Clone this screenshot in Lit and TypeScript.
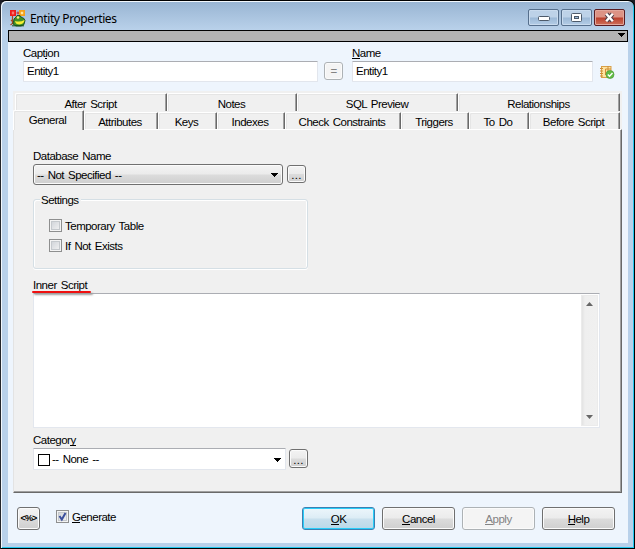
import { LitElement, html, css } from "lit";
import { customElement } from "lit/decorators.js";

const upperTabs: [string, number][] = [["After Script", 152], ["Notes", 130], ["SQL Preview", 161], ["Relationships", 162]];
const lowerTabs: [string, number][] = [["Attributes", 74], ["Keys", 59], ["Indexes", 68], ["Check Constraints", 116], ["Triggers", 68], ["To Do", 60], ["Before Script", 91]];

@customElement("app-root")
export class AppRoot extends LitElement {
  static styles = css`
    :host { display: block; width: 635px; height: 549px; background: #1c1c24; overflow: hidden;
      font: 11.5px/13px "Liberation Sans", Arial, sans-serif; letter-spacing: -.5px; word-spacing: 1.3px; color: #000; }
    * { box-sizing: border-box; }
    svg { display: block; }
    u { text-decoration: none; border-bottom: 1px solid currentColor; display: inline-block; height: 12px; line-height: 12px; }
    .window { height: 549px; padding: 1px 6px 5px 6px; display: flex; flex-direction: column;
      border: 1px solid #000; border-left-color: #24262c; border-radius: 6px 7px 0 0;
      background: linear-gradient(#98b4d2 0, #b9d1ea 29px, #b9d1ea);
      box-shadow: inset 1px 1px 0 #f2f7fc, inset -1px -1px 0 #23c7ee; }
    .title { height: 28px; flex: none; display: flex; align-items: flex-start; padding: 7px 3px 0 2px; }
    .title h1 { margin: 3px auto 0 4px; font: 12px/14px "Noto Sans", sans-serif; letter-spacing: -.4px; word-spacing: 0; }
    .wbtn { width: 31px; height: 17px; margin-left: 2px; border: 1px solid #566f8c; border-radius: 2px;
      box-shadow: inset 0 0 0 1px #c9dbee; background: linear-gradient(#bdd2e8 48%, #9bb8d6 52%, #b4cde6);
      display: flex; align-items: center; justify-content: center; }
    .close { border-color: #5a1c22; box-shadow: inset 0 0 0 1px #e2a79c; background: linear-gradient(#dc9385 48%, #ba3f2c 52%, #cf705a); }
    .bar { height: 12px; flex: none; margin: 0 0 0 1px; border: 1px solid #000; background: #b3b3b3; display: flex; justify-content: flex-end; padding: 2px 2px 0; }
    .client { flex: 1; margin: 0 0 0 1px; background: #eef5fd; display: flex; flex-direction: column; }
    .top { height: 49px; display: flex; padding: 5px 0 0 15px; flex: none; }
    .field { width: 295px; }
    .field > div:first-child { padding-left: 0; }
    .field.name { width: 241px; }
    .edit { height: 21px; margin-top: 1px; background: #fff; border: 1px solid #e2e6ed; border-top-color: #abadb3; border-left-color: #e2e3ea; border-radius: 1px; padding: 3px 3px; }
    .btn { border: 1px solid #707070; border-radius: 3px; box-shadow: inset 0 0 0 1px #fbfbfb;
      background: linear-gradient(#f3f3f3, #ebebeb 49%, #dcdcdc 51%, #cfcfcf); display: flex; align-items: center; justify-content: center; }
    .off { border-color: #adb2b5; background: #f4f4f4; color: #838383; }
    .eq { width: 19px; height: 18px; margin: 15px 9px 0 6px; }
    .small { width: 19px; height: 18px; padding-top: 3px; letter-spacing: .3px; margin-top: 1px; }
    .pages { margin: 0 5px; width: 609px; height: 402px; display: flex; flex-direction: column; background: #f0f0f0; flex: none; }
    .row1 { height: 19px; display: flex; padding: 2px 0 0 2px; }
    .row2 { height: 19px; display: flex; }
    .tab { height: 18px; border: 1px solid #fff; border-right: 1px solid #696969; border-bottom: 0; border-radius: 2px 1px 0 0;
      box-shadow: inset -1px 0 0 #a0a0a0, inset 1px 1px 0 #e5e5e5; text-align: center; padding: 3px 0 0; white-space: nowrap; }
    .row1 .tab { padding: 4px 1px 0 0; }
    .row2 .tab { margin-top: 2px; height: 17px; padding-right: 2px; }
    .row2 .general { width: 71px; height: 20px; margin: 0; padding: 3px 2px 0 0; background: #f0f0f0; z-index: 1; }
    .panel { height: 364px; border: 1px solid #fff; border-left-color: #e3e3e3; border-right: 1px solid #696969; border-bottom: 1px solid #696969;
      box-shadow: inset -1px -1px 0 #a0a0a0; padding: 20px 0 0 19px; }
    .line { display: flex; }
    .combo { width: 250px; height: 21px; justify-content: space-between; padding: 1px 4px 0 3px; margin-right: 4px; }
    .panel .db { margin-top: 1px; }
    .dash { letter-spacing: -.5px; }
    .group { width: 275px; height: 70px; margin: 14px 0 0; border: 1px solid #d5dfe5; border-radius: 3px; box-shadow: inset 1px 1px 0 #fff, inset -1px 0 0 #fff, 0 1px 0 #fff; padding: 0 0 0 15px; }
    .legend { display: block; width: 41px; height: 13px; margin: -6px 0 0 -9px; padding-left: 1px; background: #f0f0f0; }
    .check { display: flex; height: 13px; align-items: center; line-height: 15px; }
    .g1, .g2 { line-height: 13px; }
    .g1 span, .g2 span { padding-top: 2px; }
    .g1 { margin-top: 12px; }
    .g2 { margin-top: 7px; }
    .box { width: 13px; height: 13px; margin-right: 3px; border: 1px solid #8e8f8f; background: linear-gradient(135deg, #cbcfd5, #f6f6f6); box-shadow: inset 0 0 0 1px #f4f4f4, inset 0 0 0 2px #c5c9cd; flex: none; }
    .inner { margin-top: 10px; height: 13px; width: 62px; }
    .mark { height: 2px; width: 59px; margin: -1px 0 0 -1px; background: #ef1010; border-radius: 1px; box-shadow: 2px 2px 2px #999; position: relative; }
    .memo { width: 567px; height: 135px; margin-top: 0; border: 1px solid #e3e7ee; border-top-color: #abadb3; background: #fff; padding: 1px; display: flex; justify-content: flex-end; }
    .scroll { width: 17px; background: linear-gradient(90deg, #e3e3e3, #efefef 3px, #f0f0f0); border: 1px solid #ebebeb; display: flex; flex-direction: column; justify-content: space-between; align-items: center; padding: 6px 0; }
    .cat { margin-top: 6px; height: 14px; }
    .catbox { width: 253px; height: 22px; margin: 0 3px 0 0; display: flex; align-items: center; padding: 1px 4px 0; }
    .catbox + .small { height: 19px; }
    .swatch { width: 12px; height: 12px; border: 1px solid #000; margin-right: 2px; }
    .catbox svg { margin-left: auto; }
    .footer { display: flex; padding: 14px 0 0 9px; }
    .footer .btn { height: 23px; width: 73px; margin-left: 7px; padding-top: 1px; }
    .footer .code { width: 23px; margin: 0 16px 0 0; font-size: 9px; letter-spacing: -.9px; font-weight: bold; padding: 0; }
    .footer .check { margin-top: 3px; width: 239px; }
    .footer .check span { padding-top: 1px; }
    .footer .ok { border-color: #3c7fb1; box-shadow: inset 0 0 0 1px #29cdf9; background: linear-gradient(#edf6fb, #dcecf5 49%, #c9e0ed 51%, #b9d9e9); }
    .model { margin: 18px 0 0 7px; }
  `;

  arrow() {
    return html`<svg width="7" height="4" shape-rendering="crispEdges"><path d="M0 0h7v1h-1v1h-1v1h-1v1h-1v-1h-1v-1h-1v-1h-1z"/></svg>`;
  }

  render() {
    return html`<div class="window">
      <div class="title">
        <svg width="17" height="18" viewBox="0 0 17 18">
          <rect x="1.900" y="1.900" width="4.200" height="4.200" fill="#ffd9d0" stroke="#ee1c1c" stroke-width="1.800"/><path d="M2 4h4" stroke="#ee1c1c"/>
          <path d="M7.500 4h3M9 2.500v3" stroke="#c22" fill="none"/>
          <rect x="10.900" y="1.900" width="4.200" height="4.200" fill="#ffe7a0" stroke="#f5a01a" stroke-width="1.800"/>
          <path d="M3.500 7v8M2 11l2 2M1.500 16l2.500-2" stroke="#a8491e" stroke-width="1.200" fill="none"/>
          <path d="M5 10l2-2 1-1.500h3L12 8l3 1.500 1 2-1 4-3 1.500H7l-3-2z" fill="#3f8f26" stroke="#143f12" stroke-width=".8"/>
          <path d="M6 12q5 1.500 9.500-1-.5 4-5 4.500-4 0-4.500-3.500" fill="#f8ee32"/><circle cx="9" cy="8.500" r="1.300" fill="#f4ef80"/><path d="M3 16.800h12" stroke="#155018"/>
        </svg>
        <h1>Entity Properties</h1>
        <div class="wbtn"><svg width="12" height="7"><rect x=".5" y="2.500" width="11" height="4" rx="1" fill="#fff" stroke="#4d5a6a"/></svg></div>
        <div class="wbtn"><svg width="11" height="9"><rect x=".5" y=".5" width="10" height="8" rx="1" fill="#fff" stroke="#4d5a6a"/><rect x="3.500" y="3.500" width="4" height="2" fill="#9bb8d6" stroke="#4d5a6a"/></svg></div>
        <div class="wbtn close"><svg width="13" height="11"><path d="M3.500 2l6 7M9.500 2l-6 7" stroke="#51404a" stroke-width="4.500"/><path d="M3.200 1.800l6.600 7.400M9.800 1.800l-6.600 7.400" stroke="#fff" stroke-width="2.400"/></svg></div>
      </div>
      <div class="bar">${this.arrow()}</div>
      <div class="client">
        <div class="top">
          <div class="field"><div>Capt<u>i</u>on</div><div class="edit">Entity1</div></div>
          <div class="btn off eq">=</div>
          <div class="field name"><div><u>N</u>ame</div><div class="edit">Entity1</div></div>
          <svg class="model" width="15" height="15" viewBox="0 0 15 15">
            <rect x="1.500" y="1.500" width="9.500" height="11" fill="#ffe3a0" stroke="#d8a04a"/>
            <path d="M0 3.500h3M0 6h3M0 8.500h3M0 11h3M5.500 10V4h2.500v3M8 1v3h3" stroke="#cf8e36" fill="none"/>
            <circle cx="10" cy="9.500" r="4" fill="#62bd45" stroke="#4a9a3a" stroke-width=".7"/><path d="M7.800 9.500l1.700 1.700 3-3.200" stroke="#fff" stroke-width="1.400" fill="none"/>
          </svg>
        </div>
        <div class="pages">
          <div class="row1">${upperTabs.map(([t, w]) => html`<div class="tab" style="width:${w}px">${t}</div>`)}</div>
          <div class="row2"><div class="tab general">General</div>${lowerTabs.map(([t, w]) => html`<div class="tab" style="width:${w}px">${t}</div>`)}</div>
          <div class="panel">
            <div>Database Name</div>
            <div class="line db"><div class="btn combo"><span class="dash">-- Not Specified --</span>${this.arrow()}</div><div class="btn small">...</div></div>
            <div class="group"><span class="legend">Settings</span>
              <div class="check g1"><i class="box"></i><span>Temporary Table</span></div>
              <div class="check g2"><i class="box"></i><span>If Not Exists</span></div>
            </div>
            <div class="inner">Inner Script</div><div class="mark"></div>
            <div class="memo"><div class="scroll">
              <svg width="7" height="4"><path d="M3.500 0L7 4H0z" fill="#666"/></svg>
              <svg width="7" height="4"><path d="M0 0h7L3.500 4z" fill="#666"/></svg>
            </div></div>
            <div class="cat">Categor<u>y</u></div>
            <div class="line"><div class="edit catbox"><i class="swatch"></i><span class="dash">-- None --</span>${this.arrow()}</div><div class="btn small">...</div></div>
          </div>
        </div>
        <div class="footer">
          <div class="btn code">&lt;%&gt;</div>
          <div class="check"><i class="box"><svg width="11" height="11"><path d="M2.500 5l2.300 3.500L8.500 2" fill="none" stroke="#3b4f9c" stroke-width="2"/></svg></i><span><u>G</u>enerate</span></div>
          <div class="btn ok"><span><u>O</u>K</span></div><div class="btn"><span><u>C</u>ancel</span></div>
          <div class="btn off"><span><u>A</u>pply</span></div><div class="btn"><span><u>H</u>elp</span></div>
        </div>
      </div>
    </div>`;
  }
}
